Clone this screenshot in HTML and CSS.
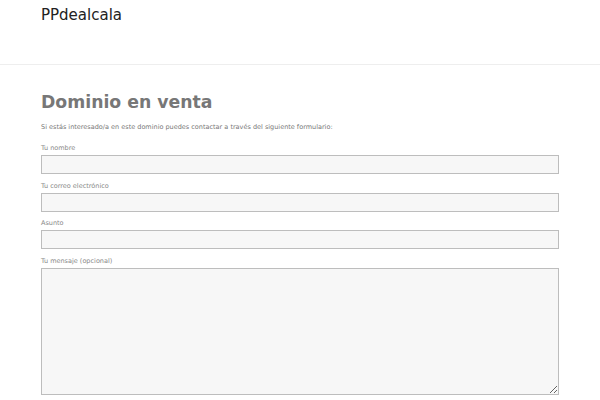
FILE: index.html
```html
<!DOCTYPE html>
<html lang="es">
<head>
<meta charset="utf-8">
<link rel="stylesheet" href="styles.css">
</head>
<body>
<header class="site-header">
  <div class="site-title">PPdealcala</div>
</header>
<main class="content">
  <h1 class="page-title">Dominio en venta</h1>
  <p class="intro">Si estás interesado/a en este dominio puedes contactar a través del siguiente formulario:</p>
  <form class="form">
    <label class="field">
      <span class="label">Tu nombre</span>
      <input class="input" type="text">
    </label>
    <label class="field">
      <span class="label">Tu correo electrónico</span>
      <input class="input" type="email">
    </label>
    <label class="field">
      <span class="label">Asunto</span>
      <input class="input" type="text">
    </label>
    <label class="field">
      <span class="label">Tu mensaje (opcional)</span>
      <textarea class="textarea"></textarea>
    </label>
  </form>
</main>
</body>
</html>
```
FILE: styles.css
```css
html, body {
  margin: 0;
  padding: 0;
  background: #fff;
  font-family: "DejaVu Sans", sans-serif;
  overflow: hidden;
}
.site-header {
  height: 65px;
  border-bottom: 1px solid #eeeeee;
  padding: 0 41px;
  box-sizing: border-box;
}
.site-title {
  padding-top: 5px;
  font-size: 15px;
  line-height: 20px;
  color: #222;
}
.content {
  padding: 26px 41px 0 41px;
}
.page-title {
  margin: 0;
  font-size: 17.3px;
  line-height: 22px;
  font-weight: bold;
  color: #777;
}
.intro {
  margin: 9px 0 0 0;
  font-size: 6.5px;
  line-height: 10px;
  color: #777;
}
.form {
  display: flex;
  flex-direction: column;
  gap: 7.5px;
  margin-top: 12px;
}
.field {
  display: flex;
  flex-direction: column;
  gap: 2px;
}
.label {
  font-size: 6.5px;
  line-height: 9px;
  color: #888;
}
.input, .textarea {
  box-sizing: border-box;
  width: 518px;
  margin: 0;
  border: 1px solid #bdbdbd;
  background: #f7f7f7;
  border-radius: 0;
  font-family: inherit;
}
.input {
  height: 19px;
}
.textarea {
  height: 127px;
  resize: vertical;
}
```
